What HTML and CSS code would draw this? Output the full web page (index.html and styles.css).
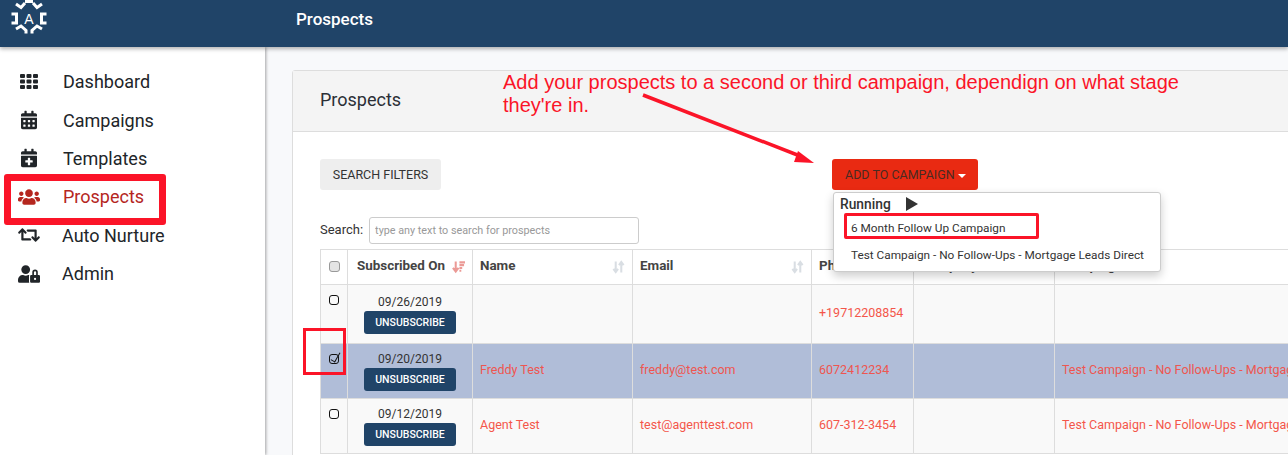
FILE: index.html
```html
<!DOCTYPE html>
<html lang="en">

<head>
    <meta charset="UTF-8">
    <meta name="viewport" content="width=device-width, initial-scale=1.0">
    <title>Prospects</title>
    <link rel="stylesheet" href="styles.css">
</head>

<body>

    <header class="topbar">
        <div class="logo">
            <svg width="58" height="40" viewBox="0 0 58 40">
                <g class="logo-gear">
                    <path d="M16 4l5 3.500 4-4.500" />
                    <path d="M42 4l-5 3.500-4-4.500" />
                    <path d="M26.500 0v1.500h5v-1.500" />
                    <path d="M11.500 14h5v9h-5" />
                    <path d="M46.500 14h-5v9h5" />
                    <path d="M16 29l5-3 5 4.500v3" />
                    <path d="M42 29l-5-3-5 4.500v3" />
                </g>
                <text class="logo-letter" x="29" y="24" text-anchor="middle">A</text>
            </svg>
        </div>
        <div class="topbar-title">Prospects</div>
    </header>

    <div class="layout">
        <nav class="sidebar">
            <a class="nav-item">
                <svg class="nav-icon" viewBox="0 0 22 20">
                    <rect x="2" y="2" width="5" height="4" rx="1" />
                    <rect x="8.5" y="2" width="5" height="4" rx="1" />
                    <rect x="15" y="2" width="5" height="4" rx="1" />
                    <rect x="2" y="7.5" width="5" height="4" rx="1" />
                    <rect x="8.5" y="7.5" width="5" height="4" rx="1" />
                    <rect x="15" y="7.5" width="5" height="4" rx="1" />
                    <rect x="2" y="13" width="5" height="4" rx="1" />
                    <rect x="8.5" y="13" width="5" height="4" rx="1" />
                    <rect x="15" y="13" width="5" height="4" rx="1" />
                </svg>
                Dashboard
            </a>
            <a class="nav-item">
                <svg class="nav-icon" viewBox="-64 -24 576 560"><path d="M0 464c0 26.5 21.5 48 48 48h352c26.5 0 48-21.5 48-48V192H0v272zm320-196c0-6.6 5.4-12 12-12h40c6.6 0 12 5.4 12 12v40c0 6.6-5.4 12-12 12h-40c-6.6 0-12-5.4-12-12v-40zm0 128c0-6.6 5.4-12 12-12h40c6.6 0 12 5.4 12 12v40c0 6.6-5.4 12-12 12h-40c-6.6 0-12-5.4-12-12v-40zM192 268c0-6.6 5.4-12 12-12h40c6.6 0 12 5.4 12 12v40c0 6.6-5.4 12-12 12h-40c-6.6 0-12-5.4-12-12v-40zm0 128c0-6.6 5.4-12 12-12h40c6.6 0 12 5.4 12 12v40c0 6.6-5.4 12-12 12h-40c-6.6 0-12-5.4-12-12v-40zM64 268c0-6.6 5.4-12 12-12h40c6.6 0 12 5.4 12 12v40c0 6.6-5.4 12-12 12H76c-6.6 0-12-5.4-12-12v-40zm0 128c0-6.6 5.4-12 12-12h40c6.6 0 12 5.4 12 12v40c0 6.6-5.4 12-12 12H76c-6.6 0-12-5.4-12-12v-40zM400 64h-48V16c0-8.8-7.2-16-16-16h-32c-8.8 0-16 7.2-16 16v48H160V16c0-8.8-7.2-16-16-16h-32c-8.8 0-16 7.2-16 16v48H48C21.5 64 0 85.5 0 112v48h448v-48c0-26.5-21.5-48-48-48z" /></svg>
                Campaigns
            </a>
            <a class="nav-item">
                <svg class="nav-icon" viewBox="-64 -24 576 560"><path d="M436 160H12c-6.6 0-12-5.4-12-12v-36c0-26.5 21.5-48 48-48h48V12c0-6.6 5.4-12 12-12h40c6.6 0 12 5.4 12 12v52h128V12c0-6.6 5.4-12 12-12h40c6.6 0 12 5.4 12 12v52h48c26.5 0 48 21.5 48 48v36c0 6.6-5.4 12-12 12zM12 192h424c6.6 0 12 5.4 12 12v260c0 26.5-21.5 48-48 48H48c-26.5 0-48-21.5-48-48V204c0-6.6 5.4-12 12-12zm316 140c0-6.6-5.4-12-12-12h-60v-60c0-6.6-5.4-12-12-12h-40c-6.6 0-12 5.4-12 12v60h-60c-6.6 0-12 5.4-12 12v40c0 6.6 5.4 12 12 12h60v60c0 6.6 5.4 12 12 12h40c6.6 0 12-5.4 12-12v-60h60c6.6 0 12-5.4 12-12v-40z" /></svg>
                Templates
            </a>
            <a class="nav-item active">
                <svg class="nav-icon" viewBox="0 0 640 512"><path d="M96 224c35.3 0 64-28.7 64-64s-28.7-64-64-64-64 28.7-64 64 28.7 64 64 64zm448 0c35.3 0 64-28.7 64-64s-28.7-64-64-64-64 28.7-64 64 28.7 64 64 64zm32 32h-64c-17.6 0-33.5 7.1-45.1 18.6 40.3 22.1 68.9 62 75.1 109.4h66c17.7 0 32-14.3 32-32v-32c0-35.3-28.7-64-64-64zm-256 0c61.9 0 112-50.1 112-112S381.9 32 320 32 208 82.1 208 144s50.1 112 112 112zm76.8 32h-8.3c-20.8 10-43.9 16-68.5 16s-47.6-6-68.5-16h-8.3C179.6 288 128 339.6 128 403.2V432c0 26.5 21.5 48 48 48h288c26.5 0 48-21.5 48-48v-28.8c0-63.6-51.6-115.2-115.2-115.2zm-223.7-13.4C161.5 263.1 145.6 256 128 256H64c-35.3 0-64 28.7-64 64v32c0 17.7 14.3 32 32 32h65.9c6.3-47.4 34.9-87.3 75.2-109.4z" /></svg>
                Prospects
            </a>
            <a class="nav-item shift">
                <svg class="nav-icon" viewBox="0 0 640 512"><path d="M629.657 343.598L528.971 444.284c-9.373 9.372-24.568 9.372-33.941 0L394.343 343.598c-9.373-9.373-9.373-24.569 0-33.941l10.823-10.823c9.562-9.562 25.133-9.34 34.419.492L480 342.118V160H292.451a24.005 24.005 0 0 1-16.971-7.029l-16-16C244.361 121.851 255.069 96 276.451 96H520c13.255 0 24 10.745 24 24v222.118l40.416-42.792c9.285-9.831 24.856-10.054 34.419-.492l10.823 10.823c9.372 9.372 9.372 24.569-.001 33.941zm-265.138 15.431A23.999 23.999 0 0 0 347.548 352H160V169.881l40.416 42.792c9.286 9.831 24.856 10.054 34.419.491l10.822-10.822c9.373-9.373 9.373-24.569 0-33.941L144.971 67.716c-9.373-9.373-24.569-9.373-33.941 0L10.343 168.402c-9.373 9.373-9.373 24.569 0 33.941l10.822 10.822c9.562 9.562 25.133 9.34 34.419-.491L96 169.881V392c0 13.255 10.745 24 24 24h243.549c21.382 0 32.09-25.851 16.971-40.971l-16.001-16z" /></svg>
                Auto Nurture
            </a>
            <a class="nav-item shift">
                <svg class="nav-icon" viewBox="0 0 640 512"><path d="M224 256A128 128 0 1 0 96 128a128 128 0 0 0 128 128zm96 64a63.08 63.08 0 0 1 8.1-30.5c-4.8-.5-9.5-1.5-14.5-1.5h-16.7a174.08 174.08 0 0 1-145.8 0h-16.7A134.43 134.43 0 0 0 0 422.4V464a48 48 0 0 0 48 48h280.9a63.54 63.54 0 0 1-8.9-32zm288-32h-32v-80a80 80 0 0 0-160 0v80h-32a32 32 0 0 0-32 32v160a32 32 0 0 0 32 32h224a32 32 0 0 0 32-32V320a32 32 0 0 0-32-32zM496 432a32 32 0 1 1 32-32 32 32 0 0 1-32 32zm32-144h-64v-80a32 32 0 0 1 64 0z" /></svg>
                Admin
            </a>
        </nav>

        <main class="content">
            <section class="card">
                <div class="card-header">Prospects</div>
                <div class="card-body">
                    <div class="toolbar">
                        <button class="btn btn-light">Search Filters</button>
                        <div class="dropdown">
                            <button class="btn btn-red">Add to Campaign<span class="caret"></span></button>
                            <div class="dropdown-menu">
                                <div class="dropdown-group">Running <svg class="play-icon" width="12" height="14" viewBox="0 0 12 14"><path d="M0 0l12 7-12 7z" /></svg></div>
                                <div class="dropdown-item">6 Month Follow Up Campaign</div>
                                <div class="dropdown-item">Test Campaign - No Follow-Ups - Mortgage Leads Direct</div>
                            </div>
                        </div>
                    </div>

                    <div class="search-row">
                        <label>Search:</label>
                        <input type="text" placeholder="type any text to search for prospects">
                    </div>

                    <table class="prospects">
                        <colgroup>
                            <col class="col-check">
                            <col class="col-date">
                            <col class="col-name">
                            <col class="col-email">
                            <col class="col-phone">
                            <col class="col-company">
                            <col class="col-campaign">
                        </colgroup>
                        <thead>
                            <tr>
                                <th class="check-cell"><input type="checkbox" class="head-check"></th>
                                <th class="date-head">
                                    <div class="th-inner">Subscribed On
                                        <svg class="sort-icon sort-on" viewBox="0 0 14 14"><path d="M4 1v10M1 8l3 4 3-4M8 2h6M8 5h5M8 8h3M8 11h2" /></svg>
                                    </div>
                                </th>
                                <th>
                                    <div class="th-inner">Name
                                        <svg class="sort-icon" viewBox="0 0 14 14"><path d="M4 1v11M1.500 9l2.500 3.500 2.500-3.500M10 13v-11M7.500 5l2.500-3.500 2.500 3.500" /></svg>
                                    </div>
                                </th>
                                <th>
                                    <div class="th-inner">Email
                                        <svg class="sort-icon" viewBox="0 0 14 14"><path d="M4 1v11M1.500 9l2.500 3.500 2.500-3.500M10 13v-11M7.500 5l2.500-3.500 2.500 3.500" /></svg>
                                    </div>
                                </th>
                                <th>Phone</th>
                                <th>Company</th>
                                <th>Campaign</th>
                            </tr>
                        </thead>
                        <tbody>
                            <tr class="first-row">
                                <td class="check-cell"><input type="checkbox"></td>
                                <td class="date-cell">09/26/2019<button class="btn-unsub">Unsubscribe</button></td>
                                <td></td>
                                <td></td>
                                <td>+19712208854</td>
                                <td></td>
                                <td></td>
                            </tr>
                            <tr class="selected">
                                <td class="check-cell"><input type="checkbox" checked></td>
                                <td class="date-cell">09/20/2019<button class="btn-unsub">Unsubscribe</button></td>
                                <td>Freddy Test</td>
                                <td>freddy@test.com</td>
                                <td>6072412234</td>
                                <td></td>
                                <td>Test Campaign - No Follow-Ups - Mortgage Leads Direct</td>
                            </tr>
                            <tr>
                                <td class="check-cell"><input type="checkbox"></td>
                                <td class="date-cell">09/12/2019<button class="btn-unsub">Unsubscribe</button></td>
                                <td>Agent Test</td>
                                <td>test@agenttest.com</td>
                                <td>607-312-3454</td>
                                <td></td>
                                <td>Test Campaign - No Follow-Ups - Mortgage Leads Direct</td>
                            </tr>
                        </tbody>
                    </table>
                </div>
            </section>
        </main>
    </div>

    <!-- Annotations drawn over the screenshot -->
    <div class="note">Add your prospects to a second or third campaign, dependign on what stage<br>they're in.</div>
    <svg class="note-arrow" width="1288" height="455" viewBox="0 0 1288 455">
        <path class="arrow-line" d="M643 95L800 156" />
        <path class="arrow-head" d="M814 163L798 151 794 162z" />
    </svg>
    <div class="mark mark-nav"></div>
    <div class="mark mark-check"></div>
    <div class="mark mark-item"></div>

</body>

</html>
```

FILE: styles.css
```css
* {
    margin: 0;
    padding: 0;
    box-sizing: border-box;
    font-family: Roboto, "Liberation Sans", sans-serif;
}

html,
body {
    height: 100%;
    overflow: hidden;
}

body {
    background: #f8f9fb;
    color: #333;
}

.topbar {
    position: relative;
    z-index: 2;
    display: flex;
    align-items: center;
    height: 47px;
    background: #204468;
    box-shadow: 0 2px 4px rgba(0, 0, 0, 0.3);
}

.logo {
    width: 296px;
    height: 47px;
}

.logo-gear path {
    fill: none;
    stroke: #fff;
    stroke-width: 3;
}

.logo-letter {
    fill: #fff;
    font-size: 14px;
    font-family: "Liberation Sans", sans-serif;
}

.topbar-title {
    color: #fff;
    font-size: 17px;
    font-weight: 500;
    margin-top: -9px;
}

.layout {
    display: flex;
    height: 408px;
}

.sidebar {
    flex: none;
    width: 265px;
    padding-top: 15.5px;
    background: #fff;
    box-shadow: 1px 0 3px rgba(0, 0, 0, 0.35);
}

.nav-item {
    display: flex;
    align-items: center;
    gap: 23px;
    height: 38.4px;
    padding-left: 18px;
    font-size: 18px;
    color: #212529;
}

.nav-item.shift {
    margin-left: -1px;
    padding-left: 19px;
    gap: 22px;
}

.nav-icon {
    flex: none;
    width: 22px;
    height: 20px;
    fill: #212529;
}

.nav-item.active {
    color: #b5261e;
}

.nav-item.active .nav-icon {
    fill: #b5261e;
}

.content {
    flex: 1;
    padding: 23px 0 0 27px;
    min-width: 0;
}

.card {
    width: 1100px;
    background: #fff;
    border: 1px solid #ddd;
    border-radius: 3px;
}

.card-header {
    height: 61px;
    padding: 18px 27px 0;
    background: #f4f4f4;
    border-bottom: 1px solid #ddd;
    font-size: 18px;
    color: #2b2f36;
}

.card-body {
    padding: 27px 27px 20px;
}

.toolbar {
    display: flex;
    gap: 391px;
    height: 31px;
}

.btn {
    height: 31px;
    padding: 0 13px;
    border: none;
    border-radius: 3px;
    font-size: 12.5px;
    text-transform: uppercase;
    color: #333;
}

.btn-light {
    width: 121px;
    padding: 0;
    background: #eee;
}

.btn-red {
    padding: 0 12px 0 13px;
    background: #e92a12;
    color: #4a2a22;
}

.caret {
    display: inline-block;
    margin-left: 3px;
    vertical-align: middle;
    border-top: 4px solid #fff;
    border-left: 4px solid transparent;
    border-right: 4px solid transparent;
}

.dropdown {
    position: relative;
}

.dropdown-menu {
    position: absolute;
    z-index: 3;
    top: 33px;
    left: 1px;
    width: 328px;
    height: 80px;
    padding: 1px 0 0 6px;
    background: #fff;
    border: 1px solid #ccc;
    border-radius: 3px;
    box-shadow: 0 4px 10px rgba(0, 0, 0, 0.2);
}

.dropdown-group {
    display: flex;
    align-items: center;
    gap: 15px;
    height: 19px;
    font-size: 13.8px;
    font-weight: 500;
    color: #333;
}

.play-icon {
    fill: #333;
}

.dropdown-item {
    height: 27px;
    padding: 8px 0 0 11px;
    font-size: 11.8px;
    color: #333;
    white-space: nowrap;
}

.search-row {
    display: flex;
    align-items: center;
    gap: 6px;
    height: 27px;
    margin-top: 27px;
    font-size: 13px;
}

.search-row label {
    margin-top: -2px;
}

.search-row input {
    width: 270px;
    height: 27px;
    padding: 0 5px;
    border: 1px solid #ccc;
    border-radius: 3px;
    font-size: 10.8px;
}

.search-row input::placeholder {
    color: #999;
}

.prospects {
    table-layout: fixed;
    width: 1033px;
    margin-top: 5px;
    border-collapse: collapse;
    font-size: 12.5px;
}

.col-check {
    width: 27px;
}

.col-date {
    width: 125px;
}

.col-name {
    width: 160px;
}

.col-email {
    width: 179px;
}

.col-phone {
    width: 102px;
}

.col-company {
    width: 141px;
}

.col-campaign {
    width: 299px;
}

.prospects th,
.prospects td {
    padding: 0 7px 4px;
    border: 1px solid #ddd;
    white-space: nowrap;
    overflow: hidden;
}

.prospects th {
    height: 35px;
    text-align: left;
    font-size: 13.4px;
    font-weight: 700;
    color: #444;
    background: #fff;
}

.prospects th.date-head {
    padding-left: 9px;
}

.prospects td {
    height: 55px;
    background: #f9f9f9;
    color: #f4564a;
}

.prospects .first-row td {
    height: 59px;
}

.prospects .selected td {
    background: #b0bdd8;
    color: #ee5650;
}

.prospects .check-cell {
    padding: 0;
    text-align: center;
    vertical-align: top;
}

.prospects td.check-cell {
    padding-top: 10px;
}

.prospects input[type="checkbox"] {
    appearance: none;
    display: inline-block;
    position: relative;
    width: 10px;
    height: 10px;
    border: 1px solid #111;
    border-radius: 3px;
    background: transparent;
    vertical-align: top;
}

.prospects input[type="checkbox"]:checked::after {
    content: "";
    position: absolute;
    left: 3px;
    top: -4px;
    width: 4px;
    height: 10px;
    border-right: 1.5px solid #111;
    border-bottom: 1.5px solid #111;
    transform: rotate(30deg);
}

.prospects th.check-cell {
    vertical-align: middle;
}

.prospects input.head-check[type="checkbox"] {
    width: 11px;
    height: 11px;
    margin-top: -2px;
    background: #e4e4e4;
    border-color: #999;
    vertical-align: middle;
}

.th-inner {
    display: flex;
    justify-content: space-between;
    align-items: center;
}

.sort-icon {
    flex: none;
    width: 13px;
    height: 14px;
    margin-top: 3px;
    fill: none;
    stroke: #d9dee3;
    stroke-width: 2.2;
}

.sort-on {
    stroke: #eb9a96;
}

.prospects td.date-cell {
    padding: 0 7px;
    text-align: center;
    color: #333;
    font-size: 12px;
}

.prospects .selected td.date-cell {
    color: #333;
}

.btn-unsub {
    display: block;
    width: 92px;
    height: 23px;
    margin: 2px auto 0;
    border: none;
    border-radius: 3px;
    background: #204468;
    color: #fff;
    font-size: 10.500px;
    font-weight: 500;
    text-transform: uppercase;
}

.note {
    position: absolute;
    z-index: 4;
    left: 503px;
    top: 71px;
    font-family: "Liberation Sans", sans-serif;
    font-size: 20px;
    line-height: 23px;
    color: #fb1428;
    white-space: nowrap;
}

.note-arrow {
    position: absolute;
    z-index: 4;
    left: 0;
    top: 0;
    pointer-events: none;
}

.arrow-line {
    fill: none;
    stroke: #fb1428;
    stroke-width: 3.500;
}

.arrow-head {
    fill: #fb1428;
}

.mark {
    position: absolute;
    z-index: 4;
    border-style: solid;
    border-color: #fb1428;
}

.mark-nav {
    left: 4px;
    top: 174px;
    width: 162px;
    height: 51px;
    border-width: 7px;
    border-radius: 3px;
}

.mark-check {
    left: 303px;
    top: 328px;
    width: 43px;
    height: 47px;
    border-width: 3px;
}

.mark-item {
    left: 844px;
    top: 213px;
    width: 195px;
    height: 26px;
    border-width: 3px;
    border-radius: 2px;
}
```
